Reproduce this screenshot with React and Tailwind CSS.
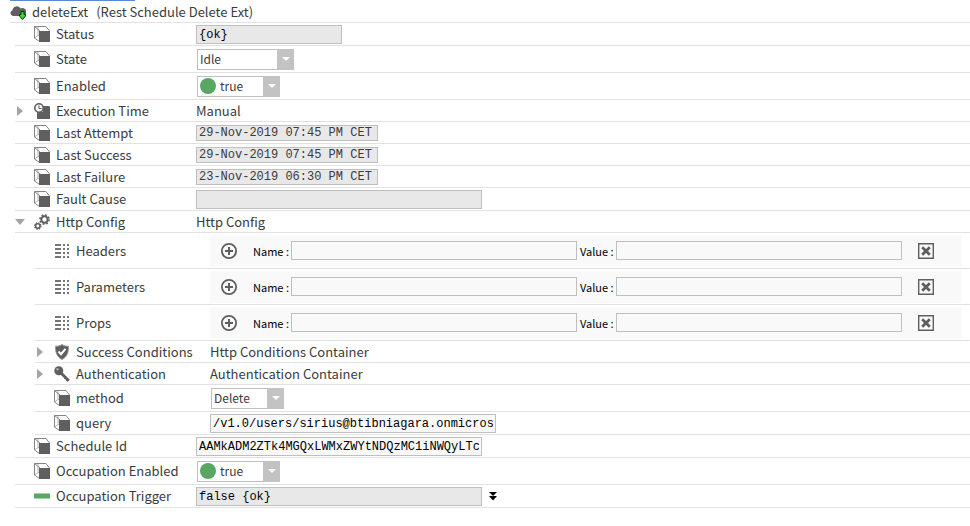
const CubeIcon = () => (
    <svg className="h-4 w-4 shrink-0" viewBox="0 0 16 16" aria-hidden="true">
        <path d="M4 0.5V9.500L0.500 12M4 9.500H6" fill="none" stroke="#b5b5b5" />
        <path d="M0.5 0.5H12L15.500 5M0.5 0.5V12L5.500 15.500M0.5 0.5L6 5" fill="none" stroke="#858585" />
        <path d="M5 5H16V16H5Z" fill="#5f5f5f" />
    </svg>
)

const ClockCubeIcon = () => (
    <svg className="h-4 w-4 shrink-0" viewBox="0 0 16 16" aria-hidden="true">
        <path d="M9 3H15L16 4V16H3V9H9Z" fill="#5f5f5f" />
        <circle cx="5" cy="5" r="4.200" fill="#f4f4f4" stroke="#5f5f5f" strokeWidth="1.600" />
        <path d="M5 2.500V5.500H7.500" fill="none" stroke="#5f5f5f" />
    </svg>
)

const GearsIcon = () => (
    <svg className="h-4 w-4 shrink-0" viewBox="0 0 16 16" fill="none" stroke="#5f5f5f" aria-hidden="true">
        <circle cx="10.500" cy="5.500" r="3.200" strokeWidth="2" />
        <circle cx="10.500" cy="5.500" r="4.600" strokeWidth="1.600" strokeDasharray="1.800 1.813" />
        <circle cx="3.800" cy="12" r="2.200" strokeWidth="1.600" />
        <circle cx="3.800" cy="12" r="3.200" strokeWidth="1.200" strokeDasharray="1.250 1.263" />
    </svg>
)

const ListIcon = () => (
    <svg className="h-4 w-4 shrink-0" viewBox="0 0 16 16" fill="#757575" aria-hidden="true">
        {[1, 5, 9, 13].map((y) => (
            <path key={y} d={`M1 ${y}h6v2h-6zM9 ${y}h2v2h-2zM13 ${y}h2v2h-2z`} />
        ))}
    </svg>
)

const ShieldIcon = () => (
    <svg className="h-4 w-4 shrink-0" viewBox="0 0 16 16" aria-hidden="true">
        <path d="M8 0.500C10 2 12.500 2.200 14.500 2.200C14.700 8.500 13 13 8 15.500C3 13 1.300 8.500 1.500 2.200C3.500 2.200 6 2 8 0.500Z" fill="#5f5f5f" stroke="#999" />
        <path d="M4.500 7.500L7 10.200L11.500 4.800" fill="none" stroke="#fff" strokeWidth="2" />
    </svg>
)

const KeyIcon = () => (
    <svg className="h-4 w-4 shrink-0" viewBox="0 0 16 16" aria-hidden="true">
        <circle cx="4.800" cy="4.800" r="4.500" fill="#5f5f5f" />
        <circle cx="3.500" cy="3.300" r="1.200" fill="#aaa" />
        <path d="M7 7L14.800 14.800" stroke="#5f5f5f" strokeWidth="2.800" />
        <path d="M10.500 12.800L12.500 11M12.500 15L14 13" stroke="#5f5f5f" strokeWidth="1.500" />
    </svg>
)

const TriggerIcon = () => (
    <svg className="h-4 w-4 shrink-0" viewBox="0 0 16 16" aria-hidden="true">
        <path d="M0 5H16V11H0Z" fill="#a5d1ac" />
        <path d="M0 6H16V10H0Z" fill="#58a762" />
    </svg>
)

const CloudIcon = () => (
    <svg className="h-4 w-4 shrink-0" viewBox="0 0 16 16" aria-hidden="true">
        <path d="M3 12A3 3 0 0 1 2.500 6.200A4.300 4.300 0 0 1 10.500 4.500A3.600 3.600 0 0 1 14 12Z" fill="#5f5f5f" />
        <path d="M11 7.500H14V10.500H15.500V12L12.500 15.500L9.500 12V10.500H11Z" fill="#2ee02e" stroke="#063806" />
    </svg>
)

const PlusIcon = () => (
    <svg className="h-4 w-4" viewBox="0 0 16 16" fill="none" stroke="#5f5f5f" aria-hidden="true">
        <circle cx="8" cy="8" r="7.100" strokeWidth="1.800" />
        <path d="M8 4V12M4 8H12" strokeWidth="2" />
    </svg>
)

const RemoveIcon = () => (
    <svg className="h-4 w-4" viewBox="0 0 16 16" fill="none" stroke="#5f5f5f" aria-hidden="true">
        <path d="M0.700 0.700H15.300V15.300H0.700Z" strokeWidth="1.400" />
        <path d="M4.200 4.200L11.800 11.800M11.800 4.200L4.200 11.800" strokeWidth="2.800" />
    </svg>
)

function Row({ id, label, icon, height, toggle, nested, children }) {
    return (
        <div className={`flex items-center border-b border-[#e2e2e2] ${height}`}>
            <div className="flex w-[19px] shrink-0 items-center">
                {toggle && (
                    <button type="button" aria-label={`Toggle ${label}`} aria-expanded={toggle === 'open'} className={toggle === 'open' ? '' : 'pl-0.5'}>
                        <svg className="h-2.5 w-2.5" viewBox="0 0 10 10" fill="#a3a3a3" aria-hidden="true">
                            {toggle === 'open' ? <path d="M0 2H10L5 8Z" /> : <path d="M0 0L6 5L0 10Z" />}
                        </svg>
                    </button>
                )}
            </div>
            {icon}
            <label htmlFor={id} className={`shrink-0 whitespace-nowrap pl-1.5 ${nested ? 'w-[140px]' : 'w-[146px]'}`}>{label}</label>
            {children}
        </div>
    )
}

function Field({ id, value = '', readOnly, size = 'h-[19px] w-[286px] pt-0.5' }) {
    return (
        <input
            id={id}
            type="text"
            defaultValue={value}
            readOnly={readOnly}
            className={`border border-[#bfbfbf] px-0.5 font-['Liberation_Mono',monospace] text-[12px] leading-4 ${size} ${readOnly ? 'bg-[#e8e8e8]' : 'bg-[#f9f9f9]'}`}
        />
    )
}

function DateField({ id, value }) {
    return <Field id={id} value={value} readOnly size="h-4 w-[182px]" />
}

function Dropdown({ id, value, width, dot }) {
    return (
        <div className={`relative ml-px h-[21px] ${width}`}>
            <select id={id} defaultValue={value} className={`h-full w-full appearance-none border border-[#bfbfbf] bg-white pb-0.5 text-[12px] leading-4 ${dot ? 'pl-[22px]' : 'pl-0.5'}`}>
                <option>{value}</option>
            </select>
            {dot && <span className="pointer-events-none absolute left-[3px] top-0.5 h-4 w-4 rounded-full bg-[#58a762]" />}
            <span className="pointer-events-none absolute inset-y-0 right-0 flex w-[17px] items-center justify-center bg-[#c3c3c3]">
                <svg className="h-1 w-2" viewBox="0 0 8 4" fill="#fff" aria-hidden="true"><path d="M0 0H8L4 4Z" /></svg>
            </span>
        </div>
    )
}

function MapEditor({ id }) {
    return (
        <div className="mr-2 flex h-8 grow items-center bg-[#f9f9f9] pl-[11px] text-black">
            <button type="button" id={id} aria-label="Add" className="mr-4"><PlusIcon /></button>
            <label htmlFor={`${id}-name`} className="w-[38px] shrink-0 whitespace-nowrap text-[11px]">Name :</label>
            <Field id={`${id}-name`} />
            <label htmlFor={`${id}-value`} className="w-[39px] shrink-0 whitespace-nowrap pl-[3px] text-[11px]">Value :</label>
            <Field id={`${id}-value`} />
            <button type="button" aria-label="Remove" className="ml-4"><RemoveIcon /></button>
        </div>
    )
}

export default function App() {
    return (
        <div className="min-h-screen bg-white pl-2.5 font-['Noto_Sans_CJK_SC',sans-serif] text-[13px] leading-5 text-[#3b3b3b]">
            <div className="h-px w-[125px] bg-[#5b87d6]" />
            <header className="flex h-[22px] items-center gap-1.5 border-b border-[#e2e2e2]">
                <CloudIcon />
                <h1>deleteExt<span className="ml-2">(Rest Schedule Delete Ext)</span></h1>
            </header>
            <main className="pl-[5px]">
                <Row id="status" label="Status" icon={<CubeIcon />} height="h-[23px]">
                    <Field id="status" value="{ok}" readOnly size="h-[19px] w-[146px] pt-0.5 text-black" />
                </Row>
                <Row id="state" label="State" icon={<CubeIcon />} height="h-[27px]">
                    <Dropdown id="state" value="Idle" width="w-[97px]" />
                </Row>
                <Row id="enabled" label="Enabled" icon={<CubeIcon />} height="h-[27px]">
                    <Dropdown id="enabled" value="true" width="w-[83px]" dot />
                </Row>
                <Row label="Execution Time" icon={<ClockCubeIcon />} height="h-[22px]" toggle="closed">Manual</Row>
                <Row id="last-attempt" label="Last Attempt" icon={<CubeIcon />} height="h-[22px]">
                    <DateField id="last-attempt" value="29-Nov-2019 07:45 PM CET" />
                </Row>
                <Row id="last-success" label="Last Success" icon={<CubeIcon />} height="h-[22px]">
                    <DateField id="last-success" value="29-Nov-2019 07:45 PM CET" />
                </Row>
                <Row id="last-failure" label="Last Failure" icon={<CubeIcon />} height="h-[22px]">
                    <DateField id="last-failure" value="23-Nov-2019 06:30 PM CET" />
                </Row>
                <Row id="fault-cause" label="Fault Cause" icon={<CubeIcon />} height="h-[23px]">
                    <Field id="fault-cause" readOnly />
                </Row>
                <Row label="Http Config" icon={<GearsIcon />} height="h-[22px]" toggle="open">Http Config</Row>
                <div className="pl-5">
                    <Row nested id="headers" label="Headers" icon={<ListIcon />} height="h-9"><MapEditor id="headers" /></Row>
                    <Row nested id="parameters" label="Parameters" icon={<ListIcon />} height="h-9"><MapEditor id="parameters" /></Row>
                    <Row nested id="props" label="Props" icon={<ListIcon />} height="h-9"><MapEditor id="props" /></Row>
                    <Row nested label="Success Conditions" icon={<ShieldIcon />} height="h-[22px]" toggle="closed">Http Conditions Container</Row>
                    <Row nested label="Authentication" icon={<KeyIcon />} height="h-[22px]" toggle="closed">Authentication Container</Row>
                    <Row nested id="method" label="method" icon={<CubeIcon />} height="h-[27px]">
                        <Dropdown id="method" value="Delete" width="w-[73px]" />
                    </Row>
                    <Row nested id="query" label="query" icon={<CubeIcon />} height="h-[23px]">
                        <Field id="query" value="/v1.0/users/sirius@btibniagara.onmicrosoft.com" size="h-[19px] w-[286px] pt-0.5 text-black" />
                    </Row>
                </div>
                <Row id="schedule-id" label="Schedule Id" icon={<CubeIcon />} height="h-[23px]">
                    <Field id="schedule-id" value="AAMkADM2ZTk4MGQxLWMxZWYtNDQzMC1iNWQyLTcwM" size="h-[19px] w-[286px] pt-0.5 text-black" />
                </Row>
                <Row id="occupation-enabled" label="Occupation Enabled" icon={<CubeIcon />} height="h-[27px]">
                    <Dropdown id="occupation-enabled" value="true" width="w-[83px]" dot />
                </Row>
                <Row id="occupation-trigger" label="Occupation Trigger" icon={<TriggerIcon />} height="h-[23px]">
                    <Field id="occupation-trigger" value="false {ok}" readOnly size="h-[19px] w-[286px] pt-0.5 text-black" />
                    <button type="button" aria-label="Actions" className="ml-1.5">
                        <svg className="h-2.5 w-2.5" viewBox="0 0 10 10" aria-hidden="true">
                            <path d="M1 1H9L5 5ZM1 5H9L5 9.500Z" />
                        </svg>
                    </button>
                </Row>
            </main>
        </div>
    )
}
